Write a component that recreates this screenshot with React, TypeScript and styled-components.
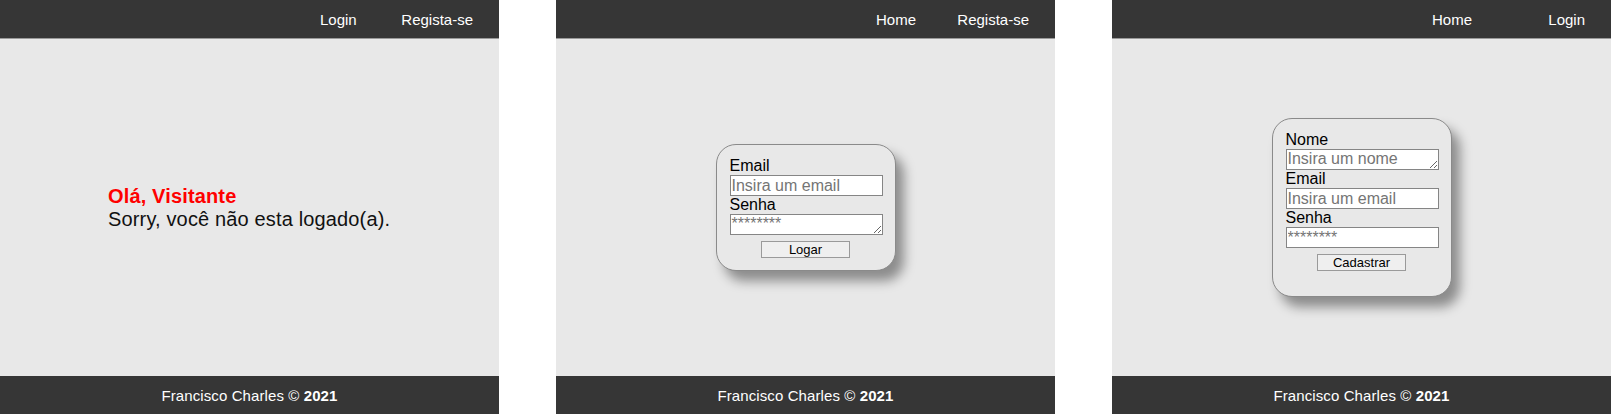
import React from "react";
import styled, { createGlobalStyle } from "styled-components";

const GlobalStyle = createGlobalStyle`
  html, body {
    margin: 0;
    padding: 0;
    background: #ffffff;
    font-family: "Liberation Sans", Arial, sans-serif;
  }
`;

const Strip = styled.div`
  display: flex;
  gap: 57px;
  width: 1611px;
  height: 414px;
`;

const Screen = styled.div`
  width: 499px;
  height: 414px;
  display: flex;
  flex-direction: column;
  background: #e8e8e8;
`;

const Header = styled.header`
  height: 38px;
  flex-shrink: 0;
  background: #363636;
  border-bottom: 1px solid #9a9a9a;
  display: flex;
  justify-content: flex-end;
  align-items: center;
  padding-right: 26px;
`;

const NavList = styled.nav`
  width: 153px;
  display: flex;
  justify-content: space-between;
`;

const NavLink = styled.a`
  color: #ffffff;
  font-size: 15px;
  text-decoration: none;
  cursor: pointer;
`;

const Main = styled.main<{ $align?: "center" | "left" }>`
  flex: 1;
  display: flex;
  align-items: center;
  justify-content: ${({ $align }) => ($align === "left" ? "flex-start" : "center")};
  padding-left: ${({ $align }) => ($align === "left" ? "108px" : "0")};
`;

const Greeting = styled.div`
  font-size: 20px;
  line-height: 23px;
  letter-spacing: 0.15px;
  color: #111111;
`;

const Hello = styled.div`
  color: #ff0000;
  font-weight: bold;
`;

const Footer = styled.footer`
  height: 38px;
  flex-shrink: 0;
  background: #363636;
  color: #ffffff;
  font-size: 15px;
  letter-spacing: 0.1px;
  display: flex;
  align-items: center;
  justify-content: center;
`;

const Card = styled.form<{ $bottom: number }>`
  box-sizing: border-box;
  width: 180px;
  padding: 12px 13px ${({ $bottom }) => $bottom}px 13px;
  border: 1px solid #8a8a8a;
  border-radius: 20px;
  background: #e8e8e8;
  box-shadow: 8px 10px 12px rgba(0, 0, 0, 0.4);
  display: flex;
  flex-direction: column;
`;

const Label = styled.label`
  font-size: 16px;
  line-height: 18px;
  color: #000000;
`;

const fieldCss = `
  box-sizing: border-box;
  width: 153px;
  height: 21px;
  margin: 0;
  padding: 0 1px;
  border: 1px solid #858585;
  border-radius: 0;
  background: #ffffff;
  font-family: "Liberation Sans", Arial, sans-serif;
  font-size: 16px;
  line-height: 18px;
  color: #000;
  outline: none;
  &::placeholder {
    color: #757575;
  }
`;

const Field = styled.input`
  ${fieldCss}
`;

const AreaField = styled.textarea`
  ${fieldCss}
  display: block;
  overflow: hidden;
  resize: both;
`;

const Submit = styled.button`
  align-self: center;
  width: 89px;
  height: 17px;
  margin-top: 6px;
  padding: 0;
  border: 1px solid #9a9a9a;
  border-radius: 0;
  background: #efefef;
  font-family: "Liberation Sans", Arial, sans-serif;
  font-size: 13px;
  line-height: 15px;
  color: #000;
`;

const Nav = ({ links }: { links: string[] }) => (
  <Header>
    <NavList>
      {links.map((l) => (
        <NavLink key={l}>{l}</NavLink>
      ))}
    </NavList>
  </Header>
);

const Credits = () => (
  <Footer>
    <span>
      Francisco Charles © <b>2021</b>
    </span>
  </Footer>
);

const HomeScreen = () => (
  <Screen>
    <Nav links={["Login", "Regista-se"]} />
    <Main $align="left">
      <Greeting>
        <Hello>Olá, Visitante</Hello>
        <div>Sorry, você não esta logado(a).</div>
      </Greeting>
    </Main>
    <Credits />
  </Screen>
);

const LoginScreen = () => (
  <Screen>
    <Nav links={["Home", "Regista-se"]} />
    <Main>
      <Card $bottom={12} onSubmit={(e) => e.preventDefault()}>
        <Label>Email</Label>
        <Field type="text" placeholder="Insira um email" />
        <Label>Senha</Label>
        <AreaField rows={1} placeholder="********" />
        <Submit type="submit">Logar</Submit>
      </Card>
    </Main>
    <Credits />
  </Screen>
);

const SignupScreen = () => (
  <Screen>
    <Nav links={["Home", "Login"]} />
    <Main>
      <Card $bottom={25} onSubmit={(e) => e.preventDefault()}>
        <Label>Nome</Label>
        <AreaField rows={1} placeholder="Insira um nome" />
        <Label>Email</Label>
        <Field type="text" placeholder="Insira um email" />
        <Label>Senha</Label>
        <Field type="text" placeholder="********" />
        <Submit type="submit">Cadastrar</Submit>
      </Card>
    </Main>
    <Credits />
  </Screen>
);

export default function App() {
  return (
    <>
      <GlobalStyle />
      <Strip>
        <HomeScreen />
        <LoginScreen />
        <SignupScreen />
      </Strip>
    </>
  );
}
